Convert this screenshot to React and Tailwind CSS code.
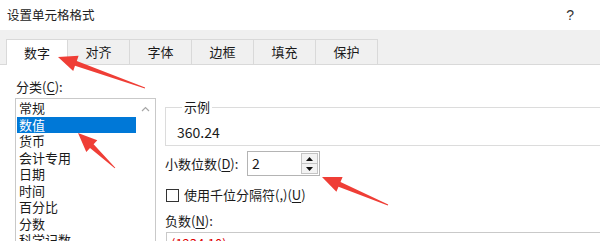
const TABS = ['数字', '对齐', '字体', '边框', '填充', '保护']

const CATEGORIES = ['常规', '数值', '货币', '会计专用', '日期', '时间', '百分比', '分数', '科学记数']

// tapered red callout arrow from tail to tip
const arrowPoints = (tx, ty, px, py) => {
  const dx = px - tx
  const dy = py - ty
  const len = Math.hypot(dx, dy)
  const ux = dx / len
  const uy = dy / len
  const nx = -uy
  const ny = ux
  const headLen = 19
  const headW = 8
  const shaftW = 2.6
  const bx = px - ux * headLen
  const by = py - uy * headLen
  const pts = [
    [tx + nx * 0.4, ty + ny * 0.4],
    [bx + nx * shaftW, by + ny * shaftW],
    [bx + nx * headW, by + ny * headW],
    [px, py],
    [bx - nx * headW, by - ny * headW],
    [bx - nx * shaftW, by - ny * shaftW],
    [tx - nx * 0.4, ty - ny * 0.4],
  ]
  return pts.map((p) => p.map((v) => v.toFixed(1)).join(',')).join(' ')
}

const Key = ({ k }) => <span className="underline underline-offset-2">{k}</span>

export default function App() {
  return (
    <div
      className="relative w-[600px] h-[241px] overflow-hidden bg-white text-[13px] text-[#1a1a1a]"
      style={{ fontFamily: '"Noto Sans CJK SC", "Noto Sans", sans-serif' }}
    >
      {/* title bar */}
      <div className="h-[30px] flex items-center justify-between pl-[7px] pr-[26px]">
        <span className="text-[12.5px] text-[#222]">设置单元格格式</span>
        <span className="text-[14px] text-[#333]" style={{ fontFamily: '"Liberation Sans", sans-serif' }}>?</span>
      </div>

      {/* tabs */}
      <div className="h-[35px] bg-[#f0f0f0] flex items-end pl-[6px] border-b border-[#d9d9d9]">
        {TABS.map((t, i) => (
          <div
            key={t}
            className={`w-[62px] flex items-center justify-center border-t border-r border-[#d9d9d9] ${
              i === 0 ? 'h-[26px] -mb-px bg-white border-l' : 'h-[25px]'
            }`}
          >
            {t}
          </div>
        ))}
      </div>

      {/* body */}
      <div className="flex pl-[15px]">
        {/* category list */}
        <div className="w-[141px] shrink-0 flex flex-col">
          <div className="mt-[13px] h-[18px] leading-[18px] pl-px">
            分类(<Key k="C" />):
          </div>
          <div className="mt-[2px] h-[200px] border border-[#c9c9c9] flex">
            <div className="flex-1 pt-px pl-px">
              {CATEGORIES.map((c, i) => (
                <div
                  key={c}
                  className={`h-[16.5px] leading-[16.5px] pl-[2px] ${
                    i === 1 ? 'bg-[#0078d7] text-white' : ''
                  }`}
                >
                  {c}
                </div>
              ))}
            </div>
            <div className="w-[19px] flex justify-center pt-[7px]">
              <svg width="9" height="6" viewBox="0 0 9 6">
                <path d="M1 5 L4.5 1.5 L8 5" fill="none" stroke="#a6a6a6" strokeWidth="1.2" />
              </svg>
            </div>
          </div>
        </div>

        {/* right panel */}
        <div className="ml-[9px] w-[460px] shrink-0 flex flex-col">
          <fieldset className="mt-[33px] border border-[#dcdcdc] pl-[11px] pb-[4px]">
            <legend className="ml-[5px] px-[2px] h-[18px] leading-[18px]">示例</legend>
            <div className="mt-[7px] h-[18px] leading-[18px] text-[14px]">360.24</div>
          </fieldset>

          <div className="mt-[5px] flex items-center">
            <span className="w-[82px]">
              小数位数(<Key k="D" />):
            </span>
            <div className="w-[73px] h-[25px] border border-[#b4b4b4] flex items-center">
              <span className="flex-1 pl-[4px] text-[14px]">2</span>
              <div className="w-[17px] h-[21px] mr-[1px] flex flex-col">
                <div className="h-[11px] border border-[#c4c4c4] bg-[#f3f3f3] flex items-center justify-center">
                  <svg width="7" height="4" viewBox="0 0 7 4">
                    <path d="M0 4 L3.5 0 L7 4 Z" fill="#111" />
                  </svg>
                </div>
                <div className="h-[10px] border border-t-0 border-[#c4c4c4] bg-[#f3f3f3] flex items-center justify-center">
                  <svg width="7" height="4" viewBox="0 0 7 4">
                    <path d="M0 0 L3.5 4 L7 0 Z" fill="#111" />
                  </svg>
                </div>
              </div>
            </div>
          </div>

          <div className="mt-[10px] h-[18px] flex items-center">
            <div className="ml-px w-[13px] h-[13px] border border-[#333] bg-white" />
            <span className="ml-[5px]">
              使用千位分隔符(,)(<Key k="U" />)
            </span>
          </div>

          <div className="mt-[8px] h-[18px] leading-[18px]">
            负数(<Key k="N" />):
          </div>
          <div className="mt-[2px] ml-px h-[30px] border border-[#c9c9c9] pl-[4px] pt-px">
            <span className="text-[#e00000] leading-[16px]">(1234.10)</span>
          </div>
        </div>
      </div>

      {/* red callout arrows */}
      <svg className="absolute inset-0 pointer-events-none" width="600" height="241">
        <polygon points={arrowPoints(145, 88, 58, 57)} fill="#ef3e36" />
        <polygon points={arrowPoints(115, 168, 78, 133)} fill="#ef3e36" />
        <polygon points={arrowPoints(388, 205, 322, 177)} fill="#ef3e36" />
      </svg>
    </div>
  )
}
